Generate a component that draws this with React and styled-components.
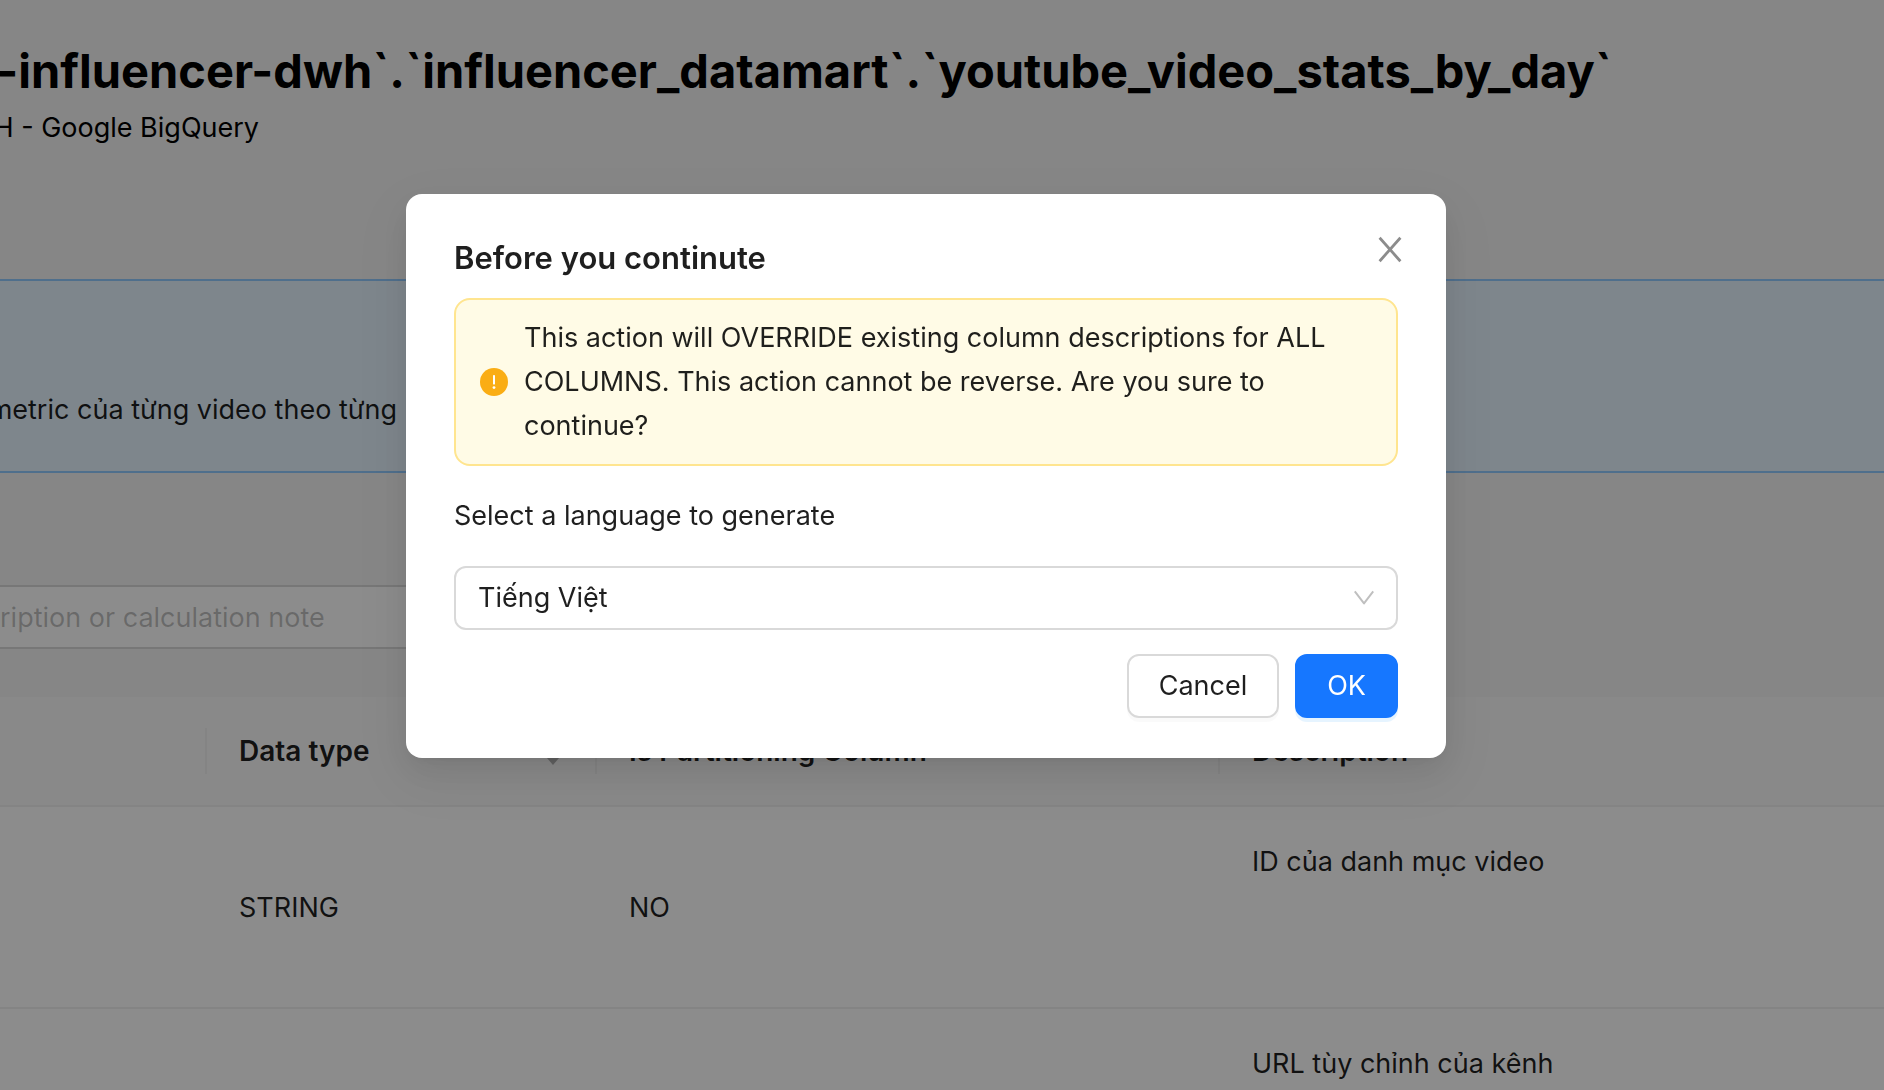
import React, { useState } from "react";
import styled, { createGlobalStyle } from "styled-components";

const GlobalStyle = createGlobalStyle`
  *, *::before, *::after { box-sizing: border-box; }
  body {
    margin: 0;
    background: #f5f5f5;
    color: rgba(0, 0, 0, 0.88);
    font-family: Inter, "Liberation Sans", sans-serif;
    font-size: 27px;
    line-height: 44px;
    overflow: hidden;
  }
  button, input, select { font: inherit; color: inherit; }
`;

const Page = styled.div`
  height: 100vh;
  overflow: hidden;
`;

/* The page is scrolled sideways, so lines keep their right end in view. */
const ScrolledLine = styled.div`
  display: flex;
  justify-content: flex-end;
  width: ${(p) => p.$end}px;
  white-space: nowrap;
`;

const PageHeader = styled.header`
  display: flex;
  flex-direction: column;
  gap: 2px;
  height: 279px;
  padding-top: 38px;
  color: #000;
`;

const PageTitle = styled.h1`
  margin: 0;
  font-size: 47px;
  font-weight: 700;
  line-height: 66px;
`;

const InfoBand = styled.section`
  height: 194px;
  padding-top: 107px;
  border: solid #91caff;
  border-width: 2px 0;
  background: #e6f4ff;
`;

const SearchBar = styled.div`
  display: flex;
  padding: 112px 0 48px;
`;

const SearchInput = styled.input`
  width: 600px;
  height: 64px;
  padding: 0;
  border: solid #d9d9d9;
  border-width: 2px 0;
  background: #fff;
  outline: none;
  &::placeholder { color: rgba(0, 0, 0, 0.25); opacity: 1; }
`;

const DataTable = styled.table`
  width: 100%;
  table-layout: fixed;
  border-collapse: separate;
  border-spacing: 0;
  background: #fff;
`;

const Col = styled.col`
  width: ${(p) => p.$width};
`;

const HeadCell = styled.th`
  padding: 0;
  height: 110px;
  border-bottom: 2px solid #f0f0f0;
  background: #fafafa;
  font-size: 28px;
  font-weight: 600;
  text-align: left;
`;

const HeadInner = styled.div`
  display: flex;
  align-items: center;
  justify-content: space-between;
  height: 46px;
  padding: 0 32px;
  border-right: ${(p) => (p.$last ? "0" : "2px solid #f0f0f0")};
`;

const Cell = styled.td`
  height: 202px;
  padding: 33px 32px 31px;
  border-bottom: 2px solid #f0f0f0;
  vertical-align: ${(p) => (p.$top ? "top" : "middle")};
`;

const SortButton = styled.button`
  display: flex;
  padding: 0;
  border: 0;
  background: none;
  color: rgba(0, 0, 0, 0.29);
`;

const Overlay = styled.div`
  position: fixed;
  inset: 0;
  display: flex;
  align-items: flex-start;
  justify-content: center;
  padding: 194px 32px 0 0;
  background: rgba(0, 0, 0, 0.45);
`;

const Dialog = styled.div`
  position: relative;
  width: 1040px;
  padding: 40px 48px;
  border-radius: 16px;
  background: #fff;
  box-shadow:
    0 12px 32px 0 rgba(0, 0, 0, 0.08),
    0 6px 12px -8px rgba(0, 0, 0, 0.12),
    0 18px 56px 16px rgba(0, 0, 0, 0.05);
`;

const DialogTitle = styled.h2`
  margin: 0 0 16px;
  font-size: 31px;
  font-weight: 600;
  line-height: 48px;
`;

const CloseButton = styled.button`
  position: absolute;
  top: 34px;
  right: 34px;
  display: flex;
  align-items: center;
  justify-content: center;
  width: 44px;
  height: 44px;
  padding: 0;
  border: 0;
  background: none;
  color: rgba(0, 0, 0, 0.45);
`;

const Alert = styled.div`
  display: flex;
  align-items: center;
  gap: 16px;
  padding: 16px 24px;
  border: 2px solid #ffe58f;
  border-radius: 16px;
  background: #fffbe6;
  svg { flex: none; }
`;

const FieldLabel = styled.label`
  display: block;
  margin: 28px 0;
`;

const SelectBox = styled.div`
  display: grid;
  align-items: center;
  > * { grid-area: 1 / 1; }
  svg {
    justify-self: end;
    margin-right: 22px;
    pointer-events: none;
    color: rgba(0, 0, 0, 0.25);
  }
`;

const Select = styled.select`
  width: 100%;
  height: 64px;
  padding: 0 22px;
  border: 2px solid #d9d9d9;
  border-radius: 12px;
  background: #fff;
  appearance: none;
  outline: none;
`;

const Footer = styled.footer`
  display: flex;
  justify-content: flex-end;
  gap: 16px;
  margin-top: 24px;
`;

const Button = styled.button`
  height: 64px;
  padding: 0 30px;
  border: 2px solid ${(p) => (p.$primary ? "#1677ff" : "#d9d9d9")};
  border-radius: 12px;
  background: ${(p) => (p.$primary ? "#1677ff" : "#fff")};
  color: ${(p) => (p.$primary ? "#fff" : "rgba(0, 0, 0, 0.88)")};
  box-shadow: 0 4px 0 ${(p) => (p.$primary ? "rgba(5, 145, 255, 0.1)" : "rgba(0, 0, 0, 0.02)")};
`;

const CloseIcon = () => (
  <svg width="32" height="32" viewBox="0 0 32 32" fill="none" stroke="currentColor" strokeWidth="2.8" aria-hidden="true">
    <path d="M5.6 3.8 26.4 27.2M26.4 3.8 5.6 27.2" />
  </svg>
);

const WarningIcon = () => (
  <svg width="28" height="28" viewBox="0 0 28 28" aria-hidden="true">
    <circle cx="14" cy="14" r="14" fill="#faad14" />
    <rect x="13" y="7" width="2" height="9.5" rx="0.4" fill="#fff" />
    <circle cx="14" cy="19.6" r="1.4" fill="#fff" />
  </svg>
);

const DownIcon = () => (
  <svg width="24" height="24" viewBox="0 0 24 24" fill="none" stroke="currentColor" strokeWidth="2" aria-hidden="true">
    <path d="M2.8 5.4 12 17.4 21.2 5.4" strokeLinejoin="round" />
  </svg>
);

const SorterIcon = () => (
  <svg width="18" height="30" viewBox="0 0 18 30" fill="currentColor" aria-hidden="true">
    <path d="M8 2 14 10H2zM8 29 2 22H14z" />
  </svg>
);

const rows = [
  { type: "STRING", partitioning: "NO", description: "ID của danh mục video" },
  { type: "", partitioning: "", description: "URL tùy chỉnh của kênh" },
];

export default function App() {
  const [language, setLanguage] = useState("vi");
  return (
    <>
      <GlobalStyle />
      <Page>
        <PageHeader>
          <ScrolledLine $end={1612}>
            <PageTitle>-influencer-dwh`.`influencer_datamart`.`youtube_video_stats_by_day`</PageTitle>
          </ScrolledLine>
          <ScrolledLine $end={259}>H - Google BigQuery</ScrolledLine>
        </PageHeader>
        <InfoBand>
          <ScrolledLine $end={397}>metric của từng video theo từng</ScrolledLine>
        </InfoBand>
        <SearchBar>
          <SearchInput aria-label="Search columns" placeholder="ription or calculation note" />
        </SearchBar>
        <DataTable>
          <colgroup>
            <Col $width="207px" />
            <Col $width="390px" />
            <Col $width="623px" />
            <Col $width="auto" />
          </colgroup>
          <thead>
            <tr>
              <HeadCell><HeadInner /></HeadCell>
              <HeadCell>
                <HeadInner>
                  Data type
                  <SortButton type="button" aria-label="Sort by data type"><SorterIcon /></SortButton>
                </HeadInner>
              </HeadCell>
              <HeadCell><HeadInner>Is Partitioning Column</HeadInner></HeadCell>
              <HeadCell><HeadInner $last>Description</HeadInner></HeadCell>
            </tr>
          </thead>
          <tbody>
            {rows.map((row) => (
              <tr key={row.description}>
                <Cell />
                <Cell>{row.type}</Cell>
                <Cell>{row.partitioning}</Cell>
                <Cell $top>{row.description}</Cell>
              </tr>
            ))}
          </tbody>
        </DataTable>
      </Page>
      <Overlay>
        <Dialog role="dialog" aria-modal="true" aria-labelledby="dialog-title">
          <DialogTitle id="dialog-title">Before you continute</DialogTitle>
          <CloseButton type="button" aria-label="Close"><CloseIcon /></CloseButton>
          <Alert role="alert">
            <WarningIcon />
            <span>
              This action will OVERRIDE existing column descriptions for ALL COLUMNS. This action
              cannot be reverse. Are you sure to continue?
            </span>
          </Alert>
          <FieldLabel htmlFor="language">Select a language to generate</FieldLabel>
          <SelectBox>
            <Select id="language" value={language} onChange={(e) => setLanguage(e.target.value)}>
              <option value="vi">Tiếng Việt</option>
            </Select>
            <DownIcon />
          </SelectBox>
          <Footer>
            <Button type="button">Cancel</Button>
            <Button type="button" $primary>OK</Button>
          </Footer>
        </Dialog>
      </Overlay>
    </>
  );
}
